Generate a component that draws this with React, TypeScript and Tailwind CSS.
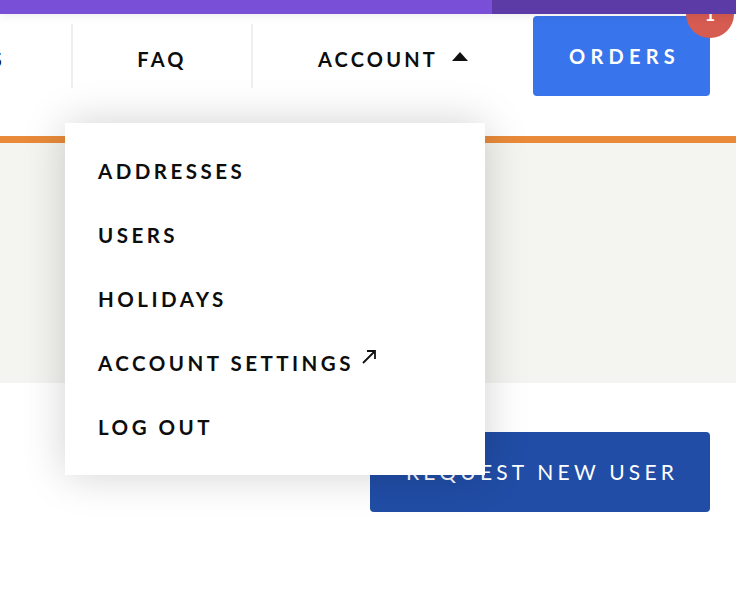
import { useState } from 'react'

const menuItems = ['ADDRESSES', 'USERS', 'HOLIDAYS', 'ACCOUNT SETTINGS', 'LOG OUT']

function ExternalArrow() {
  return (
    <svg width="16" height="16" viewBox="0 0 16 16" className="ml-[7px] -mt-[12px]">
      <path d="M2 14 L14 2 M6 2 H14 V10" fill="none" stroke="#111" strokeWidth="1.8" />
    </svg>
  )
}

function AccountMenu() {
  return (
    <div className="absolute left-[65px] top-[123px] z-20 w-[420px] bg-white py-[16px] shadow-[0_0_40px_rgba(0,0,0,0.18)]">
      {menuItems.map((item) => (
        <div key={item} className="flex h-[64px] items-center pl-[33px]">
          <span className="text-[20.5px] font-bold tracking-[0.17em] text-[#0d0d0d]">{item}</span>
          {item === 'ACCOUNT SETTINGS' && <ExternalArrow />}
        </div>
      ))}
    </div>
  )
}

export default function App() {
  const [open] = useState(true)

  return (
    <div className="relative h-[592px] w-[736px] overflow-hidden bg-white font-['Lato',sans-serif]">
      <div className="relative z-10 flex h-[14px] shadow-[0_2px_10px_rgba(0,0,0,0.08)]">
        <div className="flex-1 bg-[#7a4fd8]" />
        <div className="w-[244px] bg-[#5c3ba7]" />
      </div>

      <header className="flex h-[129px] items-start border-b-[7px] border-[#e98a3a]">
        <div className="mt-[10px] flex h-[64px] w-[71px] items-center justify-end overflow-hidden pr-[66px] pt-[6px]">
          <span className="whitespace-nowrap text-[20px] font-bold tracking-[0.16em] text-[#0d0d0d]">HOLIDAYS</span>
        </div>
        <div className="mt-[10px] flex h-[64px] w-[180px] items-center justify-center border-l-2 border-[#efefec] pt-[6px]">
          <span className="text-[20px] font-bold tracking-[0.16em] text-[#0d0d0d]">FAQ</span>
        </div>
        <div className="mt-[10px] flex h-[64px] w-[282px] items-center justify-center border-l-2 border-[#efefec] pt-[6px]">
          <span className="text-[20px] font-bold tracking-[0.16em] text-[#0d0d0d]">ACCOUNT</span>
          <svg width="16" height="9" viewBox="0 0 16 9" className="ml-[14px] -mt-[6px]">
            <path d="M0 9 L8 0 L16 9 Z" fill="#111" />
          </svg>
        </div>
        <div className="relative mt-[2px] flex h-[80px] w-[177px] items-center justify-center rounded-[4px] bg-[#3874eb]">
          <span className="pl-[6px] text-[20px] font-bold tracking-[0.26em] text-white">ORDERS</span>
          <div className="absolute -right-[24px] -top-[26px] flex h-[48px] w-[48px] items-center justify-center rounded-full bg-[#d65b50] text-[18px] font-bold text-white">
            1
          </div>
        </div>
      </header>

      <section className="h-[240px] bg-[#f4f4f0]" />

      <div className="flex justify-end pr-[26px] pt-[49px]">
        <button className="flex h-[80px] w-[340px] items-center justify-center rounded-[4px] bg-[#214da6] pl-[4px] text-[21px] font-normal tracking-[0.2em] text-white">
          REQUEST NEW USER
        </button>
      </div>

      {open && <AccountMenu />}
    </div>
  )
}
